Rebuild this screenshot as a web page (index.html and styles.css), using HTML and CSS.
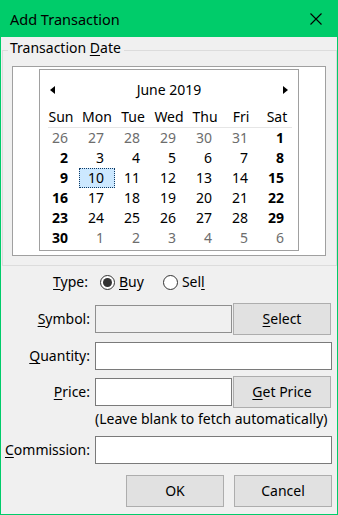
FILE: index.html
```html
<!DOCTYPE html>
<html lang="en">
<head>
    <meta charset="UTF-8">
    <title>Add Transaction</title>
    <link rel="stylesheet" href="styles.css">
</head>
<body>
    <div class="window">
        <div class="titlebar">
            <span class="title">Add Transaction</span>
            <svg class="close" width="12" height="12" viewBox="0 0 12 12">
                <path d="M0.5 0.5 L11.5 11.5 M11.5 0.5 L0.5 11.5" stroke="#000" stroke-width="1.1" fill="none"/>
            </svg>
        </div>
        <div class="content">
            <fieldset class="group">
                <legend>Transaction <u>D</u>ate</legend>
                <div class="cal-frame">
                    <div class="calendar">
                        <div class="cal-head">
                            <span class="arrow prev"></span>
                            <span class="month">June 2019</span>
                            <span class="arrow next"></span>
                        </div>
                        <div class="cal-days">
                            <span>Sun</span><span>Mon</span><span>Tue</span><span>Wed</span><span>Thu</span><span>Fri</span><span>Sat</span>
                        </div>
                        <div class="cal-sep"></div>
                        <div class="cal-dates">
                            <span class="other">26</span><span class="other">27</span><span class="other">28</span><span class="other">29</span><span class="other">30</span><span class="other">31</span><span class="wkend">1</span>
                            <span class="wkend">2</span><span>3</span><span>4</span><span>5</span><span>6</span><span>7</span><span class="wkend">8</span>
                            <span class="wkend">9</span><span class="selected">10</span><span>11</span><span>12</span><span>13</span><span>14</span><span class="wkend">15</span>
                            <span class="wkend">16</span><span>17</span><span>18</span><span>19</span><span>20</span><span>21</span><span class="wkend">22</span>
                            <span class="wkend">23</span><span>24</span><span>25</span><span>26</span><span>27</span><span>28</span><span class="wkend">29</span>
                            <span class="wkend">30</span><span class="other">1</span><span class="other">2</span><span class="other">3</span><span class="other">4</span><span class="other">5</span><span class="other">6</span>
                        </div>
                    </div>
                </div>
            </fieldset>

            <div class="form">
                <div class="row row-type">
                    <span class="label"><u>T</u>ype:</span>
                    <span class="radio checked"></span><span class="radio-text"><u>B</u>uy</span>
                    <span class="radio"></span><span class="radio-text">Sel<u>l</u></span>
                </div>
                <div class="row row-btn row-symbol">
                    <span class="label"><u>S</u>ymbol:</span>
                    <span class="input short disabled"></span>
                    <span class="button side"><u>S</u>elect</span>
                </div>
                <div class="row row-input row-qty">
                    <span class="label"><u>Q</u>uantity:</span>
                    <span class="input"></span>
                </div>
                <div class="row row-btn row-price">
                    <span class="label"><u>P</u>rice:</span>
                    <span class="input short"></span>
                    <span class="button side"><u>G</u>et Price</span>
                </div>
                <div class="row row-help">
                    <span class="label"></span>
                    <span class="help">(Leave blank to fetch automatically)</span>
                </div>
                <div class="row row-input row-comm">
                    <span class="label"><u>C</u>ommission:</span>
                    <span class="input"></span>
                </div>
                <div class="actions">
                    <span class="button">OK</span>
                    <span class="button">Cancel</span>
                </div>
            </div>
        </div>
    </div>
</body>
</html>
```

FILE: styles.css
```css
body {
    margin: 0;
    font-family: "Segoe UI", "Noto Sans", sans-serif;
    font-size: 14px;
    line-height: 20px;
    color: #000;
    background: #f0f0f0;
}
u {
    text-decoration: underline;
    text-underline-offset: 2px;
}
.window {
    width: 338px;
    height: 515px;
    box-sizing: border-box;
    border: 1px solid #00cc6a;
    border-top: none;
    background: #f0f0f0;
}
.titlebar {
    height: 37px;
    background: #00cc6a;
    display: flex;
    align-items: center;
    padding: 0 15px 0 9px;
    font-size: 14.5px;
}
.title {
    flex: 1;
}
.close {
    display: block;
}

/* date group box */
.group {
    margin: 1px 0 0 1px;
    padding: 4px 10px 9px 5px;
    border: 1px solid #dcdcdc;
    min-inline-size: 0;
}
.group legend {
    padding: 0 3px 4px 2px;
    line-height: 20px;
}
.cal-frame {
    margin-left: 4px;
    height: 186px;
    border: 1px solid #a0a0a0;
    background: #fff;
    padding-top: 2px;
    box-sizing: content-box;
}
.calendar {
    width: 258px;
    height: 180px;
    margin: 0 auto;
    border: 1px solid #a0a0a0;
}
.cal-head {
    display: flex;
    align-items: center;
    justify-content: space-between;
    padding: 10px 10px 0 10px;
    height: 20px;
}
.arrow {
    width: 0;
    height: 0;
    border-top: 4px solid transparent;
    border-bottom: 4px solid transparent;
}
.arrow.prev {
    border-right: 5px solid #000;
}
.arrow.next {
    border-left: 5px solid #000;
}
.cal-days, .cal-dates {
    display: grid;
    grid-template-columns: repeat(7, 36px);
    width: 252px;
    margin: 0 auto;
}
.cal-days {
    margin-top: 7px;
    text-align: center;
}
.cal-days span {
    height: 20px;
}
.cal-sep {
    height: 1px;
    margin: 0 6px 0 8px;
    background: #e6e6e6;
}
.cal-dates span {
    height: 20px;
    box-sizing: border-box;
    text-align: right;
    padding-right: 11px;
}
.cal-dates .other {
    color: #6d6d6d;
}
.cal-dates .wkend {
    font-weight: bold;
}
.cal-dates .selected {
    background: #cce8ff;
    border: 1px dotted #0f3b66;
    padding-right: 10px;
    line-height: 18px;
}

/* form */
.form {
    padding-right: 5px;
}
.row {
    display: flex;
    align-items: center;
}
.label {
    width: 89px;
    margin-right: 5px;
    text-align: right;
    flex: none;
    white-space: nowrap;
}
.row-type {
    height: 20px;
    margin-top: 6px;
}
.row-type .label {
    width: 87px;
    margin-right: 12px;
}
.radio {
    width: 13px;
    height: 13px;
    border: 1px solid #333;
    border-radius: 50%;
    background: #fff;
    box-sizing: content-box;
    display: flex;
    align-items: center;
    justify-content: center;
}
.radio.checked::after {
    content: "";
    width: 9px;
    height: 9px;
    border-radius: 50%;
    background: #333;
}
.radio-text {
    margin-left: 4px;
    margin-right: 19px;
}
.row-btn {
    height: 32px;
}
.row-symbol {
    margin-top: 11px;
}
.row-price {
    margin-top: 6px;
}
.row-input {
    height: 28px;
}
.row-qty {
    margin-top: 7px;
}
.row-comm {
    margin-top: 7px;
}
.row-help {
    height: 20px;
    margin-top: 1px;
}
.help {
    white-space: nowrap;
}
.input {
    flex: 1;
    height: 28px;
    box-sizing: border-box;
    border: 1px solid #7a7a7a;
    background: #fff;
}
.input.short {
    flex: none;
    width: 137px;
}
.input.disabled {
    background: #f0f0f0;
    border-color: #8f8f8f;
}
.button {
    width: 98px;
    height: 32px;
    box-sizing: border-box;
    border: 1px solid #adadad;
    background: #e1e1e1;
    display: flex;
    align-items: center;
    justify-content: center;
}
.button.side {
    margin-left: 1px;
}
.actions {
    display: flex;
    justify-content: flex-end;
    gap: 10px;
    margin-top: 11px;
}
```
